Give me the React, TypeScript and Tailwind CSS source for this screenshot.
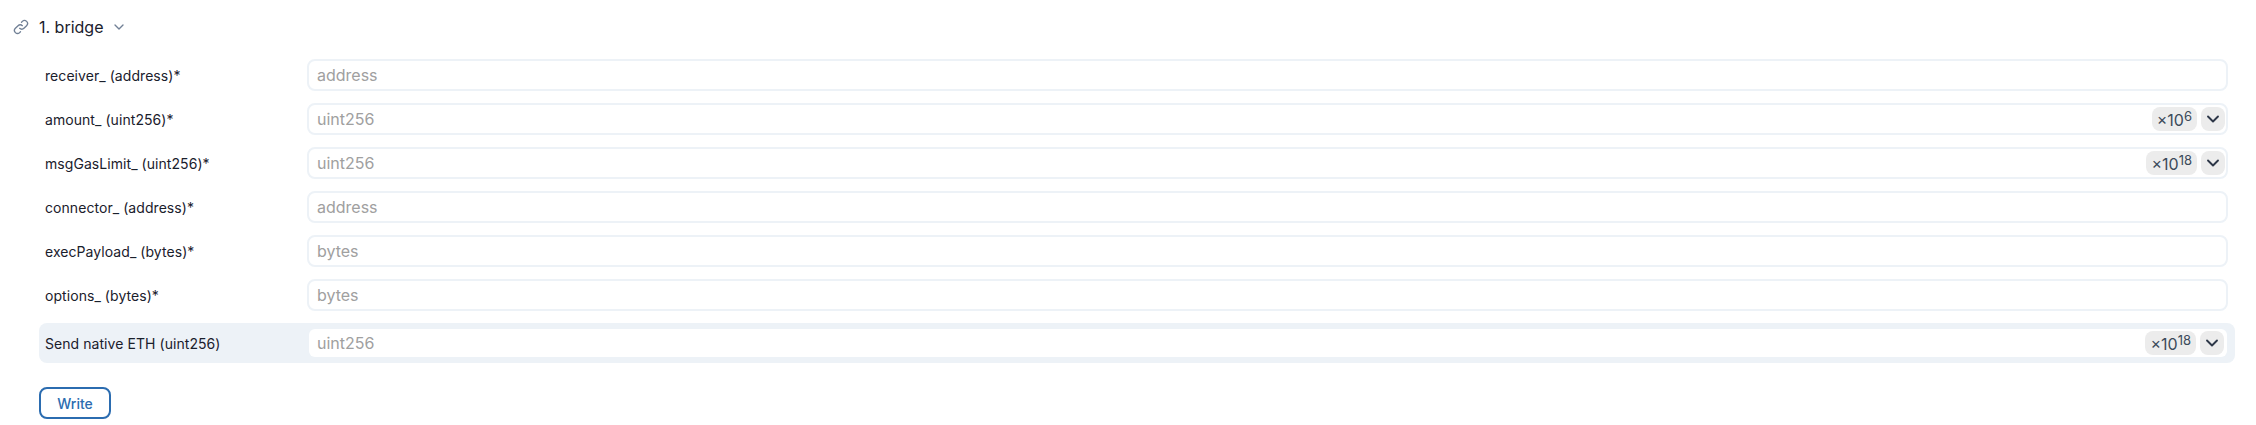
import { ChevronDown } from 'lucide-react';

interface Field {
  label: string;
  placeholder: string;
  power?: number;
}

const fields: Field[] = [
  { label: 'receiver_ (address)*', placeholder: 'address' },
  { label: 'amount_ (uint256)*', placeholder: 'uint256', power: 6 },
  { label: 'msgGasLimit_ (uint256)*', placeholder: 'uint256', power: 18 },
  { label: 'connector_ (address)*', placeholder: 'address' },
  { label: 'execPayload_ (bytes)*', placeholder: 'bytes' },
  { label: 'options_ (bytes)*', placeholder: 'bytes' },
];

function Multiplier({ power }: { power: number }) {
  return (
    <div className="absolute right-[3px] top-1/2 -translate-y-1/2 flex items-center gap-[4px]">
      <span className="h-[24px] px-[5px] rounded-[8px] bg-[#ececec] flex items-baseline pt-[3px] text-[16px] text-[#3b4a5a] leading-[20px]">
        ×10<sup className="text-[13px] leading-none top-[-5px]">{power}</sup>
      </span>
      <span className="w-[24px] h-[24px] rounded-[8px] bg-[#ececec] flex items-center justify-center text-[#2d3748]">
        <ChevronDown size={20} strokeWidth={2.25} />
      </span>
    </div>
  );
}

function FieldInput({ field, bare }: { field: Field; bare?: boolean }) {
  return (
    <div className="relative flex-1">
      <input
        readOnly
        placeholder={field.placeholder}
        className={
          bare
            ? 'w-full h-[28px] rounded-[6px] bg-white px-[8px] text-[16px] outline-none placeholder:text-[#a0a0a0]'
            : 'w-full h-[32px] rounded-[8px] border-2 border-[#edf2f7] bg-white px-[8px] text-[16px] outline-none placeholder:text-[#a0a0a0]'
        }
      />
      {field.power !== undefined && <Multiplier power={field.power} />}
    </div>
  );
}

export default function App() {
  return (
    <div className="w-[2256px] h-[425px] bg-white font-['Inter',sans-serif] text-[#1a202c] overflow-hidden">
      {/* Header */}
      <div className="flex items-center h-[24px] mt-[15px] ml-[13px]">
        <svg className="w-[16px] h-[16px] text-[#718096]" fill="none" stroke="currentColor" viewBox="0 0 24 24">
          <path strokeLinecap="round" strokeLinejoin="round" strokeWidth={2} d="M10 14a4.5 4.5 0 0 0 6.4 0l4-4a4.5 4.5 0 0 0-6.4-6.4l-1.2 1.2M14 10a4.5 4.5 0 0 0-6.4 0l-4 4a4.5 4.5 0 0 0 6.4 6.4l1.2-1.2" />
        </svg>
        <span className="ml-[10px] text-[16px] font-normal">1. bridge</span>
        <ChevronDown className="ml-[7px] text-[#718096]" size={16} strokeWidth={2} />
      </div>

      {/* Form */}
      <div className="mt-[20px] ml-[39px] mr-[21px] flex flex-col">
        <div className="flex flex-col gap-[12px] pr-[7px]">
          {fields.map((f) => (
            <div key={f.label} className="flex items-center pl-[6px]">
              <label className="w-[262px] text-[14px] font-normal tracking-[0.06px]">{f.label}</label>
              <FieldInput field={f} />
            </div>
          ))}
        </div>

        <div className="mt-[12px] h-[40px] rounded-[8px] bg-[#edf2f7] flex items-center pl-[6px] pr-[8px]">
          <label className="w-[264px] text-[14px] font-normal tracking-[0.06px]">Send native ETH (uint256)</label>
          <FieldInput field={{ label: '', placeholder: 'uint256', power: 18 }} bare />
        </div>

        <button className="mt-[24px] w-[72px] h-[32px] rounded-[8px] border-2 border-[#2b6cb0] text-[#2b6cb0] text-[14px] font-[550] flex items-center justify-center">
          Write
        </button>
      </div>
    </div>
  );
}
